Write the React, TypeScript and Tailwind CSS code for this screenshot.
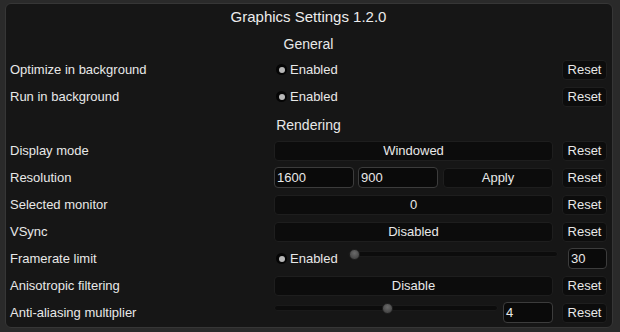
import React from "react";

const font = { fontFamily: '"Liberation Sans", Arial, sans-serif' };

function ResetBtn() {
  return (
    <div className="w-[45px] h-[20px] shrink-0 rounded-[4px] bg-[#0c0c0c] border border-[#1e1e1e] flex items-center justify-center text-[13px] text-[#e8e8e8]">
      Reset
    </div>
  );
}

function WideBtn({ text, w = "w-[279px]" }: { text: string; w?: string }) {
  return (
    <div className={`${w} h-[20px] shrink-0 rounded-[4px] bg-[#0c0c0c] border border-[#1e1e1e] flex items-center justify-center text-[13px] text-[#e8e8e8]`}>
      {text}
    </div>
  );
}

function Input({ text, w }: { text: string; w: string }) {
  return (
    <div className={`${w} h-[21px] shrink-0 rounded-[4px] bg-[#0a0a0a] border border-[#3c3c3c] flex items-center pl-[2px] text-[13px] text-[#e8e8e8]`}>
      {text}
    </div>
  );
}

function RadioDot() {
  return (
    <div className="w-[11px] h-[11px] rounded-full bg-[#050505] flex items-center justify-center mr-[3px]">
      <div className="w-[6px] h-[6px] rounded-full bg-[#b8b8b8]" />
    </div>
  );
}

function Radio() {
  return (
    <div className="flex items-center w-[279px] pl-[2px]">
      <RadioDot />
      <span className="text-[13px] text-[#e8e8e8]">Enabled</span>
    </div>
  );
}

function Slider({ w, pos }: { w: string; pos: number }) {
  return (
    <div className={`${w} h-[12px] shrink-0 relative flex items-center`}>
      <div className="w-full h-[6px] rounded-full bg-[#0c0c0c] border border-[#1a1a1a]" />
      <div
        className="absolute w-[11px] h-[11px] rounded-full bg-[radial-gradient(circle_at_50%_35%,#6a6a6a,#3a3a3a)] border border-[#222]"
        style={{ left: pos }}
      />
    </div>
  );
}

function Row({ label, children }: { label: string; children: React.ReactNode }) {
  return (
    <div className="h-[27px] flex items-center">
      <div className="w-[264px] shrink-0 text-[13px] text-[#e8e8e8]">{label}</div>
      {children}
    </div>
  );
}

function Heading({ text }: { text: string }) {
  return (
    <div className="h-[27px] pt-[3px] flex items-center justify-center text-[14px] text-[#e8e8e8]">{text}</div>
  );
}

export default function App() {
  return (
    <div className="w-[620px] h-[332px] bg-[#2a2a2a] pt-[3px] pl-[5px]" style={font}>
      <div className="w-[608px] h-[325px] rounded-[6px] border border-[#363636] bg-[#161616] pl-[4px] pr-[5px]">
        <div className="h-[25px] pt-[2px] flex items-center justify-center text-[15px] text-[#ececec]">
          Graphics Settings 1.2.0
        </div>
        <Heading text="General" />
        <Row label="Optimize in background">
          <Radio />
          <div className="w-[9px]" />
          <ResetBtn />
        </Row>
        <Row label="Run in background">
          <Radio />
          <div className="w-[9px]" />
          <ResetBtn />
        </Row>
        <Heading text="Rendering" />
        <Row label="Display mode">
          <WideBtn text="Windowed" />
          <div className="w-[9px]" />
          <ResetBtn />
        </Row>
        <Row label="Resolution">
          <div className="w-[279px] flex items-center">
            <Input text="1600" w="w-[80px]" />
            <div className="w-[4px]" />
            <Input text="900" w="w-[80px]" />
            <div className="w-[5px]" />
            <WideBtn text="Apply" w="w-[110px]" />
          </div>
          <div className="w-[9px]" />
          <ResetBtn />
        </Row>
        <Row label="Selected monitor">
          <WideBtn text="0" />
          <div className="w-[9px]" />
          <ResetBtn />
        </Row>
        <Row label="VSync">
          <WideBtn text="Disabled" />
          <div className="w-[9px]" />
          <ResetBtn />
        </Row>
        <Row label="Framerate limit">
          <div className="w-[74px] shrink-0 flex items-center pl-[2px]">
            <RadioDot />
            <span className="text-[13px] text-[#e8e8e8]">Enabled</span>
          </div>
          <div className="self-start pt-[3px]">
            <Slider w="w-[210px]" pos={1} />
          </div>
          <div className="w-[10px]" />
          <Input text="30" w="w-[39px]" />
        </Row>
        <Row label="Anisotropic filtering">
          <WideBtn text="Disable" />
          <div className="w-[9px]" />
          <ResetBtn />
        </Row>
        <Row label="Anti-aliasing multiplier">
          <div className="self-start pt-[3px]">
            <Slider w="w-[224px]" pos={108} />
          </div>
          <div className="w-[5px]" />
          <Input text="4" w="w-[50px]" />
          <div className="w-[9px]" />
          <ResetBtn />
        </Row>
      </div>
    </div>
  );
}
